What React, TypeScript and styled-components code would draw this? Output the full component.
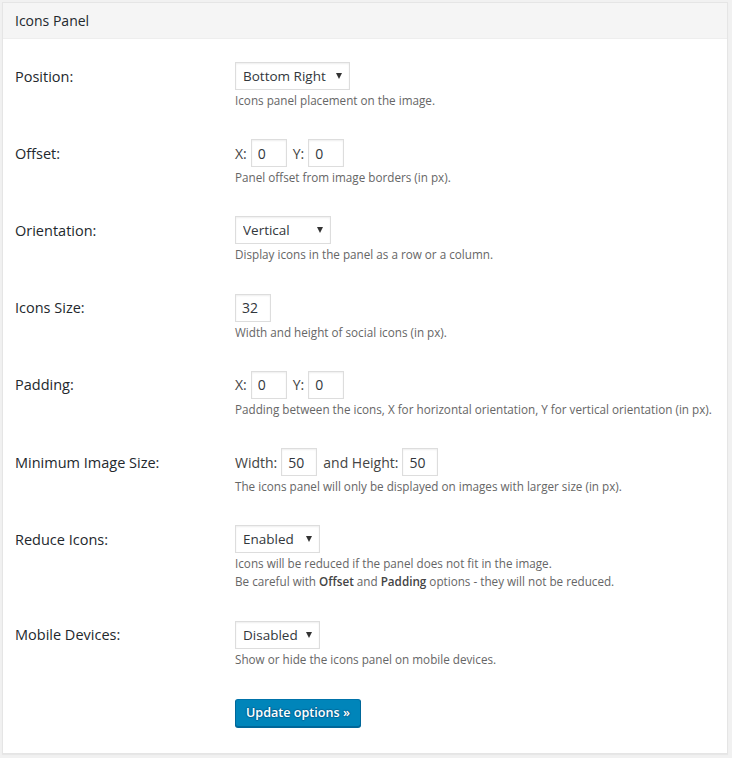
import React from "react";
import styled, { createGlobalStyle } from "styled-components";

const Global = createGlobalStyle`
  html, body { margin: 0; padding: 0; background: #f1f1f1; }
  body { font-family: "Open Sans", "Noto Sans", sans-serif; color: #444; }
  * { box-sizing: border-box; }
`;

const Page = styled.div`
  padding: 2px 4px 4px 2px;
`;

const Panel = styled.div`
  background: #fff;
  border: 1px solid #e5e5e5;
  box-shadow: 0 1px 1px rgba(0, 0, 0, 0.04);
  height: 752px;
  display: flex;
  flex-direction: column;
`;

const Header = styled.h3`
  margin: 0;
  height: 36px;
  background: #f5f5f5;
  border-bottom: 1px solid #eee;
  display: flex;
  align-items: center;
  padding: 0 12px;
  font-size: 14px;
  font-weight: 400;
  color: #23282d;
`;

const Body = styled.div`
  padding: 8px 12px 0;
`;

const Row = styled.div`
  display: grid;
  grid-template-columns: 220px 1fr;
  padding: 15px 0;
`;

const Label = styled.div`
  height: 28px;
  display: flex;
  align-items: center;
  font-size: 14.5px;
  color: #23282d;
`;

const Field = styled.div`
  display: flex;
  flex-direction: column;
  align-items: flex-start;
`;

const Controls = styled.div`
  display: flex;
  align-items: center;
  gap: 4px;
  height: 28px;
  font-size: 14px;
  color: #444;
`;

const Description = styled.p`
  margin: 1px 0 0;
  font-size: 11.7px;
  line-height: 18.2px;
  color: #666;
  strong { font-weight: 600; color: #444; }
`;

const SelectWrap = styled.div<{ $w: number }>`
  position: relative;
  width: ${(p) => p.$w}px;
  height: 28px;
`;

const Select = styled.select`
  appearance: none;
  -webkit-appearance: none;
  width: 100%;
  height: 28px;
  margin: 0;
  padding: 0 14px 0 7px;
  border: 1px solid #ddd;
  border-radius: 0;
  background: #fff;
  box-shadow: inset 0 1px 2px rgba(0, 0, 0, 0.07);
  font-family: inherit;
  font-size: 13.5px;
  color: #32373c;
  outline: none;
`;

const Arrow = styled.svg`
  position: absolute;
  right: 8px;
  top: 11px;
  width: 6px;
  height: 6px;
  pointer-events: none;
`;

const NumInput = styled.input`
  width: 36px;
  height: 28px;
  margin: 0 2px 0 0;
  padding: 0 6px;
  border: 1px solid #ddd;
  border-radius: 0;
  background: #fff;
  box-shadow: inset 0 1px 2px rgba(0, 0, 0, 0.07);
  font-family: inherit;
  font-size: 14px;
  color: #32373c;
  outline: none;
`;

const Actions = styled.div`
  padding: 16px 0 0 220px;
`;

const Button = styled.button`
  height: 28px;
  padding: 0 10px 1px;
  border: 1px solid #0073aa;
  border-color: #0073aa #006799 #006799;
  border-radius: 3px;
  background: #0085ba;
  box-shadow: 0 1px 0 #006799;
  color: #fff;
  font-family: inherit;
  font-size: 12.6px;
  font-weight: 600;
  line-height: 26px;
  text-shadow: 0 -1px 1px #006799, 1px 0 1px #006799, 0 1px 1px #006799, -1px 0 1px #006799;
  cursor: pointer;
`;

const Dropdown = ({ value, width }: { value: string; width: number }) => (
  <SelectWrap $w={width}>
    <Select defaultValue={value}>
      <option>{value}</option>
    </Select>
    <Arrow viewBox="0 0 6 6">
      <path d="M0 0 H6 L3 6 Z" fill="#333" />
    </Arrow>
  </SelectWrap>
);

export default function App() {
  return (
    <>
      <Global />
      <Page>
        <Panel>
          <Header>Icons Panel</Header>
          <Body>
            <Row>
              <Label>Position:</Label>
              <Field>
                <Dropdown value="Bottom Right" width={115} />
                <Description>Icons panel placement on the image.</Description>
              </Field>
            </Row>
            <Row>
              <Label>Offset:</Label>
              <Field>
                <Controls>
                  X: <NumInput defaultValue="0" /> Y: <NumInput defaultValue="0" />
                </Controls>
                <Description>Panel offset from image borders (in px).</Description>
              </Field>
            </Row>
            <Row>
              <Label>Orientation:</Label>
              <Field>
                <Dropdown value="Vertical" width={96} />
                <Description>Display icons in the panel as a row or a column.</Description>
              </Field>
            </Row>
            <Row>
              <Label>Icons Size:</Label>
              <Field>
                <Controls>
                  <NumInput defaultValue="32" />
                </Controls>
                <Description>Width and height of social icons (in px).</Description>
              </Field>
            </Row>
            <Row>
              <Label>Padding:</Label>
              <Field>
                <Controls>
                  X: <NumInput defaultValue="0" /> Y: <NumInput defaultValue="0" />
                </Controls>
                <Description>
                  Padding between the icons, X for horizontal orientation, Y for vertical orientation (in px).
                </Description>
              </Field>
            </Row>
            <Row>
              <Label>Minimum Image Size:</Label>
              <Field>
                <Controls>
                  Width: <NumInput defaultValue="50" /> and Height: <NumInput defaultValue="50" />
                </Controls>
                <Description>
                  The icons panel will only be displayed on images with larger size (in px).
                </Description>
              </Field>
            </Row>
            <Row>
              <Label>Reduce Icons:</Label>
              <Field>
                <Dropdown value="Enabled" width={85} />
                <Description>
                  Icons will be reduced if the panel does not fit in the image.
                  <br />
                  Be careful with <strong>Offset</strong> and <strong>Padding</strong> options - they will not be reduced.
                </Description>
              </Field>
            </Row>
            <Row>
              <Label>Mobile Devices:</Label>
              <Field>
                <Dropdown value="Disabled" width={85} />
                <Description>Show or hide the icons panel on mobile devices.</Description>
              </Field>
            </Row>
            <Actions>
              <Button type="button">Update options »</Button>
            </Actions>
          </Body>
        </Panel>
      </Page>
    </>
  );
}
